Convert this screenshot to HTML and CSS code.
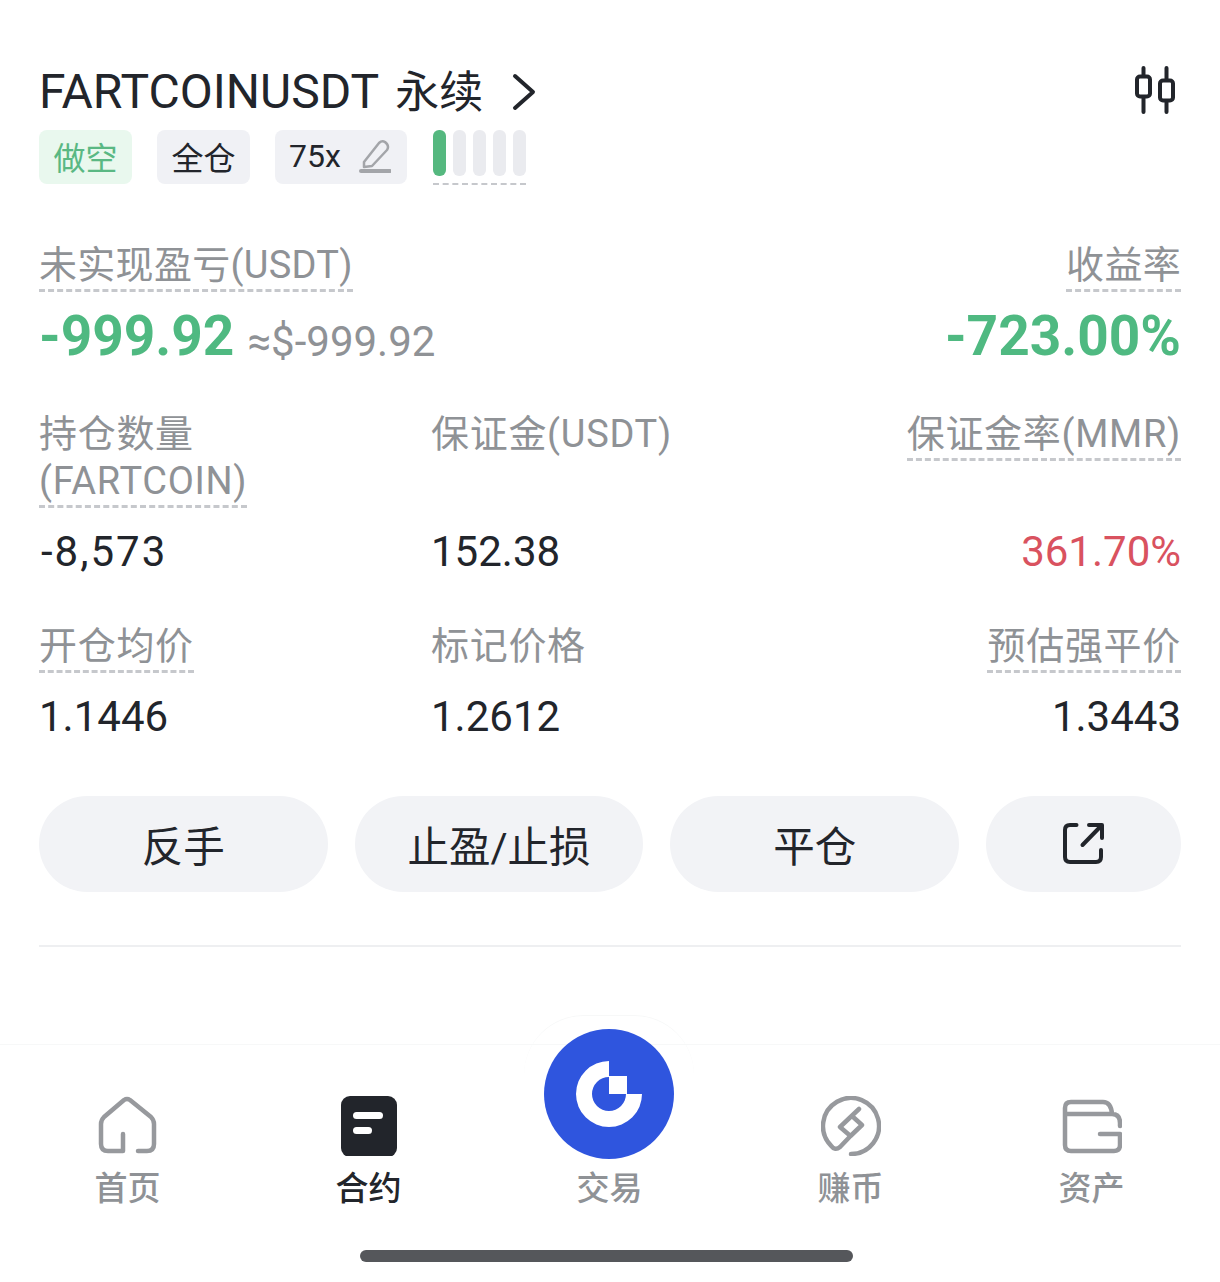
FILE: index.html
```html
<!DOCTYPE html>
<html lang="zh-CN">

<head>
    <meta charset="UTF-8">
    <meta name="viewport" content="width=device-width, initial-scale=1.0">
    <title>FARTCOINUSDT 永续</title>
    <link rel="stylesheet" href="styles.css">
</head>

<body>
    <div class="page">
        <main class="position">
            <header class="title-row">
                <h1 class="title">FARTCOINUSDT <span class="title-cn">永续</span></h1>
                <svg class="chevron" viewBox="0 0 26 40" aria-hidden="true">
                    <path d="M4 4 L22 20 L4 36" />
                </svg>
                <svg class="candles" viewBox="0 0 44 48" aria-hidden="true">
                    <path d="M9.5 2 V10 M9.5 31 V46 M32.5 2 V14 M32.5 35 V46" />
                    <rect x="3" y="10.5" width="13" height="20" rx="3" />
                    <rect x="26" y="14.5" width="13" height="20" rx="3" />
                </svg>
            </header>

            <div class="tags">
                <span class="tag tag-green">做空</span>
                <span class="tag">全仓</span>
                <span class="tag tag-leverage">75x
                    <svg class="pencil" viewBox="0 0 32 34" aria-hidden="true">
                        <path d="M5 23 L20 4 Q23 1 26 3 L28 5 Q30 8 28 11 L13 27 L5 28 Z" />
                        <path class="pencil-line" d="M2 32 H31" />
                    </svg>
                </span>
                <div class="risk">
                    <i class="risk-bar risk-on"></i>
                    <i class="risk-bar"></i>
                    <i class="risk-bar"></i>
                    <i class="risk-bar"></i>
                    <i class="risk-bar"></i>
                </div>
            </div>

            <section class="summary">
                <div class="summary-left">
                    <div class="label"><span class="dashed">未实现盈亏(USDT)</span></div>
                    <div class="pnl-row">
                        <span class="big green">-999.92</span>
                        <span class="approx">≈$-999.92</span>
                    </div>
                </div>
                <div class="summary-right">
                    <div class="label"><span class="dashed">收益率</span></div>
                    <div class="big green">-723.00%</div>
                </div>
            </section>

            <section class="stats">
                <div class="cell">
                    <div class="label">持仓数量<br><span class="dashed">(FARTCOIN)</span></div>
                    <div class="value value-wide">-8,573</div>
                </div>
                <div class="cell">
                    <div class="label">保证金(USDT)</div>
                    <div class="value">152.38</div>
                </div>
                <div class="cell cell-right">
                    <div class="label"><span class="dashed">保证金率(MMR)</span></div>
                    <div class="value red">361.70%</div>
                </div>
                <div class="cell">
                    <div class="label"><span class="dashed">开仓均价</span></div>
                    <div class="value">1.1446</div>
                </div>
                <div class="cell">
                    <div class="label">标记价格</div>
                    <div class="value">1.2612</div>
                </div>
                <div class="cell cell-right">
                    <div class="label"><span class="dashed">预估强平价</span></div>
                    <div class="value">1.3443</div>
                </div>
            </section>

            <div class="actions">
                <button class="action" type="button">反手</button>
                <button class="action" type="button">止盈/止损</button>
                <button class="action" type="button">平仓</button>
                <button class="action action-share" type="button" aria-label="分享">
                    <svg class="share" viewBox="0 0 46 46" aria-hidden="true">
                        <path d="M16.5 4 H10 Q5 4 5 9 V36 Q5 41 10 41 H36 Q41 41 41 36 V29" />
                        <path d="M22.5 24 L41 5 M29 4 H42 V17" />
                    </svg>
                </button>
            </div>

            <hr class="divider">
        </main>

        <nav class="tabbar">
            <div class="tab">
                <svg class="tab-icon tab-home" viewBox="0 0 60 60" aria-hidden="true">
                    <path d="M26 38 V55 H11 Q4 55 4 48 V28 Q4 24 7 21 L27 4 Q30 2 33 4 L54 21 Q57 24 57 28 V48 Q57 55 50 55 H41" />
                </svg>
                <span>首页</span>
            </div>
            <div class="tab tab-active">
                <svg class="tab-icon" viewBox="0 0 60 60" aria-hidden="true">
                    <rect class="solid" x="2" y="0" width="56" height="61" rx="9" />
                    <rect class="solid-bar" x="14" y="16" width="30" height="7" rx="3.5" />
                    <rect class="solid-bar" x="14" y="31" width="19" height="7" rx="3.5" />
                </svg>
                <span>合约</span>
            </div>
            <div class="tab">
                <div class="tab-spacer"></div>
                <span>交易</span>
            </div>
            <div class="tab">
                <svg class="tab-icon" viewBox="0 0 60 60" aria-hidden="true">
                    <path d="M30 58 A28 28 0 1 0 10.2 49.8 Q14 55 19 51 L29.5 40 L19 31 L38 13 M29.5 40 L41 29 L31 20" />
                </svg>
                <span>赚币</span>
            </div>
            <div class="tab">
                <svg class="tab-icon" viewBox="0 0 60 60" aria-hidden="true">
                    <path d="M3 18 V12 Q3 6 9 6 H41 Q49 6 50 18 M3 18 H50 Q58 18 58 27 V30 M38 38 H58 V49 Q58 55 52 55 H9 Q3 55 3 49 V18" />
                </svg>
                <span>资产</span>
            </div>

            <div class="trade-bump"></div>
            <svg class="trade-logo" viewBox="0 0 130 130" aria-hidden="true">
                <circle cx="65" cy="65" r="65" fill="#2f55de" />
                <path fill="#fff" d="M65 32 V48 A17 17 0 1 0 82 65 H98 A33 33 0 1 1 65 32 Z" />
                <rect fill="#fff" x="65" y="47" width="18" height="18" />
            </svg>
        </nav>

        <div class="home-bar"></div>
    </div>
</body>

</html>
```

FILE: styles.css
```css
* {
    box-sizing: border-box;
}

body {
    margin: 0;
    background-color: #fff;
    color: #22252b;
    font-family: 'Roboto', 'Noto Sans CJK SC', sans-serif;
}

.page {
    display: flex;
    flex-direction: column;
    height: 1282px;
    overflow: hidden;
}

.position {
    height: 1044px;
    padding: 62px 39px 0 39px;
}

.title-row {
    display: flex;
    align-items: center;
    height: 60px;
}

.title {
    margin: 0;
    font-size: 48px;
    font-weight: 400;
    line-height: 60px;
    white-space: pre;
}

.title-cn {
    margin-left: 5px;
    font-size: 44px;
}

.chevron {
    width: 26px;
    height: 40px;
    margin-left: 28px;
    fill: none;
    stroke: #22252b;
    stroke-width: 4;
    stroke-linecap: round;
    stroke-linejoin: round;
}

.candles {
    width: 44px;
    height: 48px;
    margin-left: auto;
    margin-right: 3px;
    margin-bottom: 5px;
    fill: none;
    stroke: #22252b;
    stroke-width: 4;
    stroke-linecap: round;
}

.tags {
    display: flex;
    align-items: flex-start;
    gap: 25px;
    height: 55px;
    margin-top: 8px;
}

.tag {
    display: flex;
    align-items: center;
    justify-content: center;
    gap: 16px;
    width: 93px;
    height: 54px;
    padding-bottom: 2px;
    border-radius: 8px;
    background-color: #f0f1f5;
    font-size: 32px;
}

.tag-green {
    background-color: #e9f8ee;
    color: #5ab883;
}

.tag-leverage {
    width: 132px;
    gap: 18px;
    padding-right: 2px;
}

.pencil {
    width: 32px;
    height: 34px;
    fill: none;
    stroke: #a3a5a9;
    stroke-width: 2.5;
    stroke-linejoin: round;
}

.pencil-line {
    stroke-width: 4;
    stroke-linecap: round;
}

.risk {
    display: flex;
    gap: 7px;
    height: 55px;
    margin-left: 1px;
    border-bottom: 2px dashed #c6c8cc;
}

.risk-bar {
    display: block;
    width: 13px;
    height: 46px;
    border-radius: 6px;
    background-color: #eaebef;
}

.risk-on {
    background-color: #55b87f;
}

.summary {
    display: flex;
    justify-content: space-between;
    margin-top: 57px;
}

.summary-right {
    text-align: right;
}

.label {
    color: #8f9296;
    font-size: 38px;
    letter-spacing: 0.3px;
    line-height: 47px;
}

.dashed {
    padding-bottom: 2px;
    border-bottom: 3px dashed #c6c8cc;
}

.pnl-row {
    display: flex;
    align-items: flex-start;
    gap: 13px;
}

.big {
    height: 72px;
    padding-top: 12px;
    font-size: 55px;
    font-weight: 700;
    line-height: 70px;
}

.green {
    color: #4fb981;
}

.red {
    color: #d9525f;
}

.approx {
    margin-top: 28px;
    color: #8f9296;
    font-size: 42px;
    line-height: 50px;
}

.stats {
    display: grid;
    grid-template-columns: 392px 1fr 1fr;
    row-gap: 46px;
    margin-top: 44px;
}

.stats .label {
    letter-spacing: 0.7px;
}

.cell {
    display: flex;
    flex-direction: column;
    justify-content: space-between;
}

.cell-right {
    text-align: right;
}

.value {
    margin-top: 22px;
    font-size: 42px;
    line-height: 50px;
}

.value-wide {
    padding-left: 2px;
    letter-spacing: 2px;
}

.actions {
    display: grid;
    grid-template-columns: 1fr 1fr 1fr 195px;
    gap: 27px;
    margin-top: 54px;
}

.action {
    height: 96px;
    padding: 0;
    border: none;
    border-radius: 48px;
    background-color: #f2f3f6;
    color: #22252b;
    font-family: inherit;
    font-size: 41.5px;
}

.action-share {
    display: flex;
    align-items: center;
    justify-content: center;
}

.share {
    width: 46px;
    height: 46px;
    fill: none;
    stroke: #22252b;
    stroke-width: 4;
    stroke-linecap: round;
    stroke-linejoin: round;
}

.divider {
    height: 2px;
    margin: 53px 0 0 0;
    border: none;
    background-color: #eeeff1;
}

.tabbar {
    position: relative;
    display: grid;
    grid-template-columns: repeat(5, 241px);
    height: 190px;
    padding: 51px 7px 0 7px;
    border-top: 1px solid #f7f8f8;
}

.tab {
    display: flex;
    flex-direction: column;
    align-items: center;
    color: #8f9296;
    font-size: 33px;
    font-weight: 500;
    line-height: 44px;
}

.tab-active {
    color: #22252b;
}

.tab-icon,
.tab-spacer {
    width: 60px;
    height: 60px;
    margin-bottom: 11px;
}

.tab-icon {
    fill: none;
    stroke: #97999d;
    stroke-width: 4.5;
    stroke-linecap: round;
    stroke-linejoin: round;
}

.tab-home {
    margin-left: -2px;
}

.solid {
    fill: #22252b;
    stroke: none;
}

.solid-bar {
    fill: #fff;
    stroke: none;
}

.trade-bump {
    position: absolute;
    top: -30px;
    left: 524px;
    width: 170px;
    height: 60px;
    border-radius: 85px 85px 0 0;
    border-top: 1px solid #f7f8f8;
}

.trade-logo {
    position: absolute;
    top: -16px;
    left: 544px;
    width: 130px;
    height: 130px;
}

.home-bar {
    width: 493px;
    height: 12px;
    margin: 16px 0 0 360px;
    border-radius: 6px;
    background-color: #55575b;
}
```
